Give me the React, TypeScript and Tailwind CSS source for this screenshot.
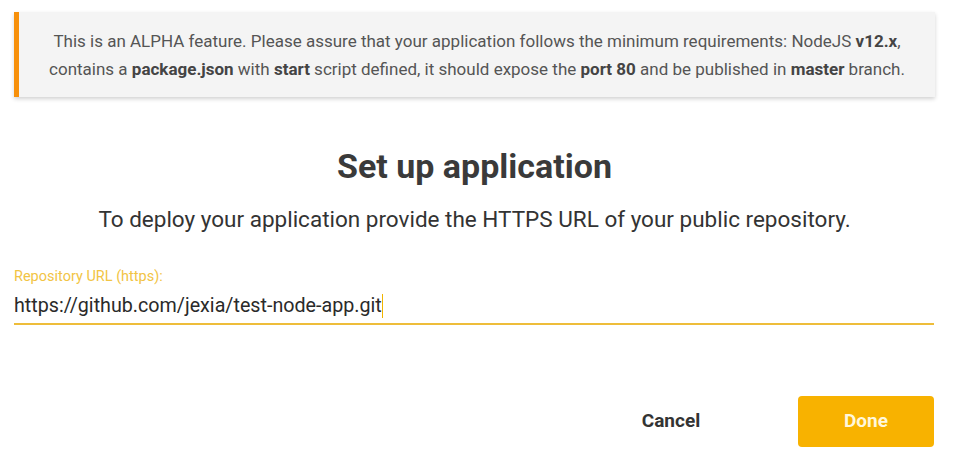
export default function App() {
  return (
    <div
      className="w-[959px] h-[468px] bg-white pl-[14px] pr-[24px] pt-[12px] text-[#333]"
      style={{ fontFamily: "Roboto, 'Liberation Sans', sans-serif" }}
    >
      <div className="w-[921px] h-[85px] flex flex-col items-center justify-center bg-[#f4f4f4] border-l-[5px] border-[#f7900a] shadow-[0_2px_4px_rgba(0,0,0,0.18)] text-[17px] leading-[28px] text-[#555] text-center">
        <p>
          This is an ALPHA feature. Please assure that your application follows the minimum requirements: NodeJS{" "}
          <b className="text-[#444]">v12.x</b>,
        </p>
        <p>
          contains a <b className="text-[#444]">package.json</b> with <b className="text-[#444]">start</b> script
          defined, it should expose the <b className="text-[#444]">port 80</b> and be published in{" "}
          <b className="text-[#444]">master</b> branch.
        </p>
      </div>

      <h1 className="mt-[49px] text-center text-[34px] leading-[40px] font-bold text-[#3a3a3a]">Set up application</h1>
      <p className="mt-[19px] text-center text-[22.5px] leading-[28px] text-[#333]">
        To deploy your application provide the HTTPS URL of your public repository.
      </p>

      <div className="mt-[35px] w-[920px]">
        <label className="block text-[14.5px] leading-[18px] text-[#f2c444]">Repository URL (https):</label>
        <div className="mt-[6px] pb-[3px] border-b-2 border-[#eebd3a] flex items-center">
          <span className="text-[19.7px] leading-[28px] text-[#2a2a2a]">https://github.com/jexia/test-node-app.git</span>
          <span className="w-[1.5px] h-[24px] bg-[#f0b400]" />
        </div>
      </div>

      <div className="mt-[71px] w-[920px] flex justify-end items-center">
        <button className="mr-[59px] w-[136px] h-[51px] text-[19px] font-bold text-[#333]">Cancel</button>
        <button className="w-[136px] h-[51px] rounded-[4px] bg-[#f8b200] text-[19px] font-bold text-[#fff7dc]">
          Done
        </button>
      </div>
    </div>
  );
}
